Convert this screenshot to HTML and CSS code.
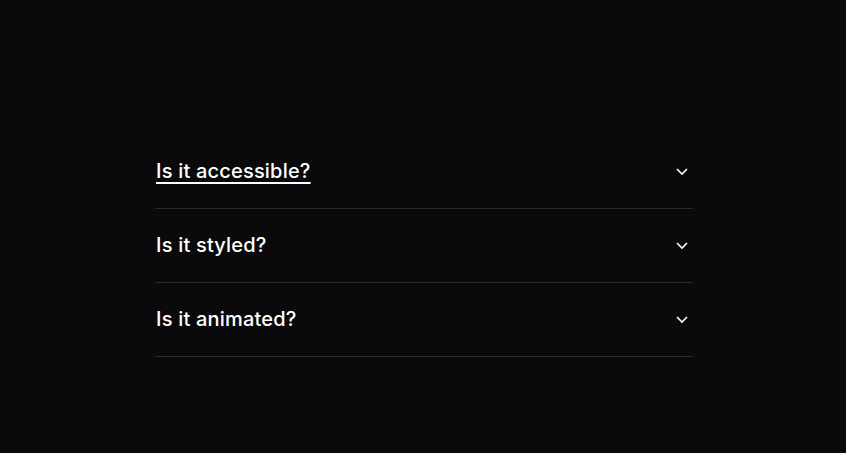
FILE: index.html
```html
<!DOCTYPE html>
<html>
<head>
  <title>Accordion</title>
  <link rel="stylesheet" href="styles.css">
</head>
<body>
  <div class="accordion">
    <div class="item">
      <button class="trigger active">
        <span class="label">Is it accessible?</span>
        <svg class="chevron" width="14" height="14" viewBox="0 0 14 14"><path d="M2 5l5 5 5-5" fill="none" stroke="currentColor" stroke-width="1.6"/></svg>
      </button>
    </div>
    <div class="item">
      <button class="trigger">
        <span class="label">Is it styled?</span>
        <svg class="chevron" width="14" height="14" viewBox="0 0 14 14"><path d="M2 5l5 5 5-5" fill="none" stroke="currentColor" stroke-width="1.6"/></svg>
      </button>
    </div>
    <div class="item">
      <button class="trigger">
        <span class="label">Is it animated?</span>
        <svg class="chevron" width="14" height="14" viewBox="0 0 14 14"><path d="M2 5l5 5 5-5" fill="none" stroke="currentColor" stroke-width="1.6"/></svg>
      </button>
    </div>
  </div>
</body>
</html>
```

FILE: styles.css
```css
body {
  margin: 0;
  padding-top: 135px;
  background: #0a0a0c;
  font-family: Inter, "Noto Sans", sans-serif;
  color: #fff;
}
.accordion {
  width: 538px;
  margin-left: 155px;
}
.item {
  border-bottom: 1px solid #2a2a2e;
}
.trigger {
  display: flex;
  align-items: center;
  justify-content: space-between;
  width: 100%;
  height: 73px;
  padding: 0 4px 2px 1px;
  background: none;
  border: none;
  color: #fff;
  font-family: inherit;
  font-size: 20px;
  font-weight: 500;
  letter-spacing: 0.2px;
  cursor: pointer;
}
.trigger.active .label {
  text-decoration: underline;
  text-underline-offset: 4px;
  text-decoration-thickness: 2px;
}
.chevron {
  color: #fff;
}
```
